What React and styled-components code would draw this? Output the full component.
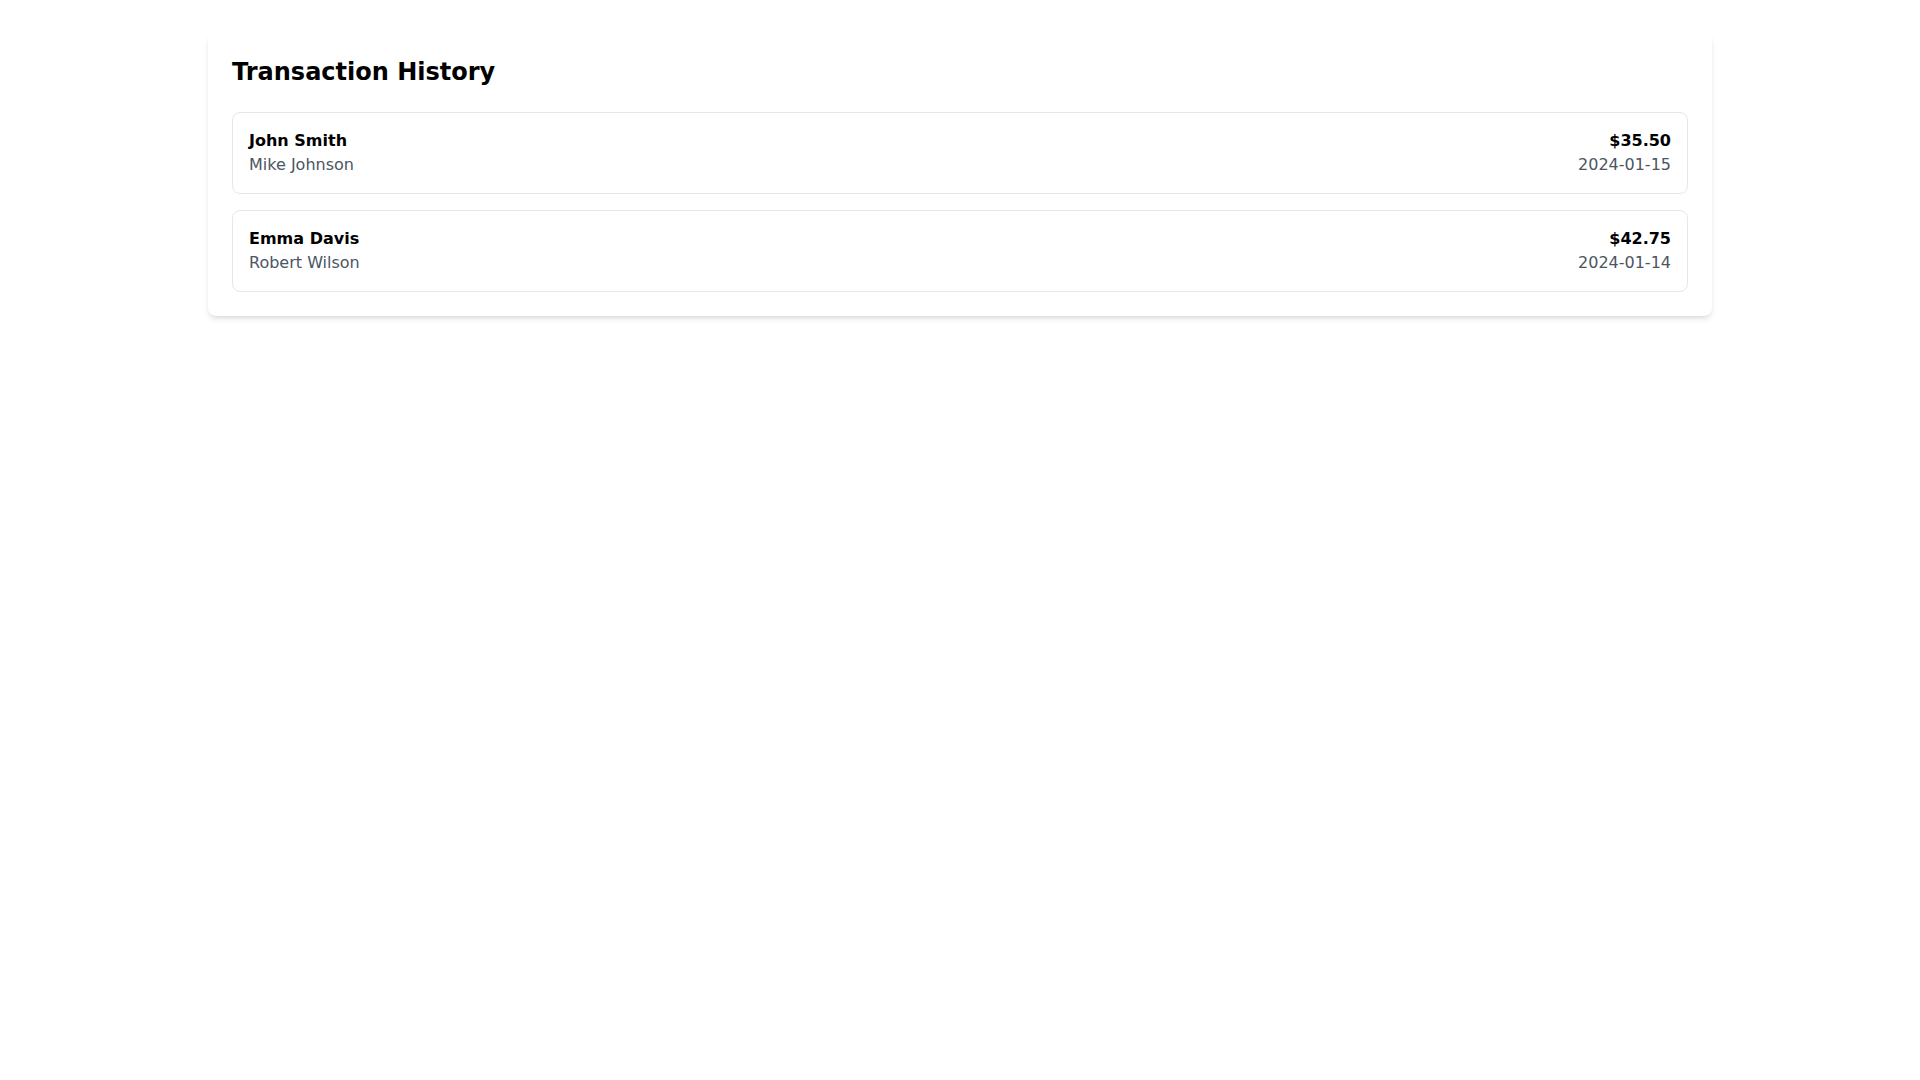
import React from 'react';
import styled, { createGlobalStyle } from 'styled-components';

const GlobalStyle = createGlobalStyle`
    body {
        margin: 0;
        background: #ffffff;
        font-family: "DejaVu Sans", sans-serif;
    }
`

const Page = styled.div`
    padding: 32px 208px;
`

const Card = styled.section`
    background: #ffffff;
    border-radius: 8px;
    box-shadow: 0 4px 6px -1px rgba(0, 0, 0, 0.1), 0 2px 4px -2px rgba(0, 0, 0, 0.1);
    padding: 24px;
`

const Title = styled.h2`
    margin: 0 0 24px;
    font-size: 24px;
    line-height: 32px;
    font-weight: 700;
    color: #000;
`

const List = styled.div`
    display: flex;
    flex-direction: column;
    gap: 16px;
`

const Row = styled.div`
    display: flex;
    justify-content: space-between;
    align-items: center;
    border: 1px solid #e5e7eb;
    border-radius: 8px;
    padding: 16px;
`

const Column = styled.div`
    display: flex;
    flex-direction: column;
    text-align: ${p => (p.$right ? 'right' : 'left')};
`

const Primary = styled.span`
    font-size: 16px;
    line-height: 24px;
    font-weight: 700;
    color: #000;
`

const Secondary = styled.span`
    font-size: 16px;
    line-height: 24px;
    color: #4b5563;
`

const transactions = [
    { from: 'John Smith', to: 'Mike Johnson', amount: '$35.50', date: '2024-01-15' },
    { from: 'Emma Davis', to: 'Robert Wilson', amount: '$42.75', date: '2024-01-14' },
]

const App = () => {
    return (
        <Page>
            <GlobalStyle />
            <Card>
                <Title>Transaction History</Title>
                <List>
                    {transactions.map(t => (
                        <Row key={t.from}>
                            <Column>
                                <Primary>{t.from}</Primary>
                                <Secondary>{t.to}</Secondary>
                            </Column>
                            <Column $right>
                                <Primary>{t.amount}</Primary>
                                <Secondary>{t.date}</Secondary>
                            </Column>
                        </Row>
                    ))}
                </List>
            </Card>
        </Page>
    )
}

export default App;
